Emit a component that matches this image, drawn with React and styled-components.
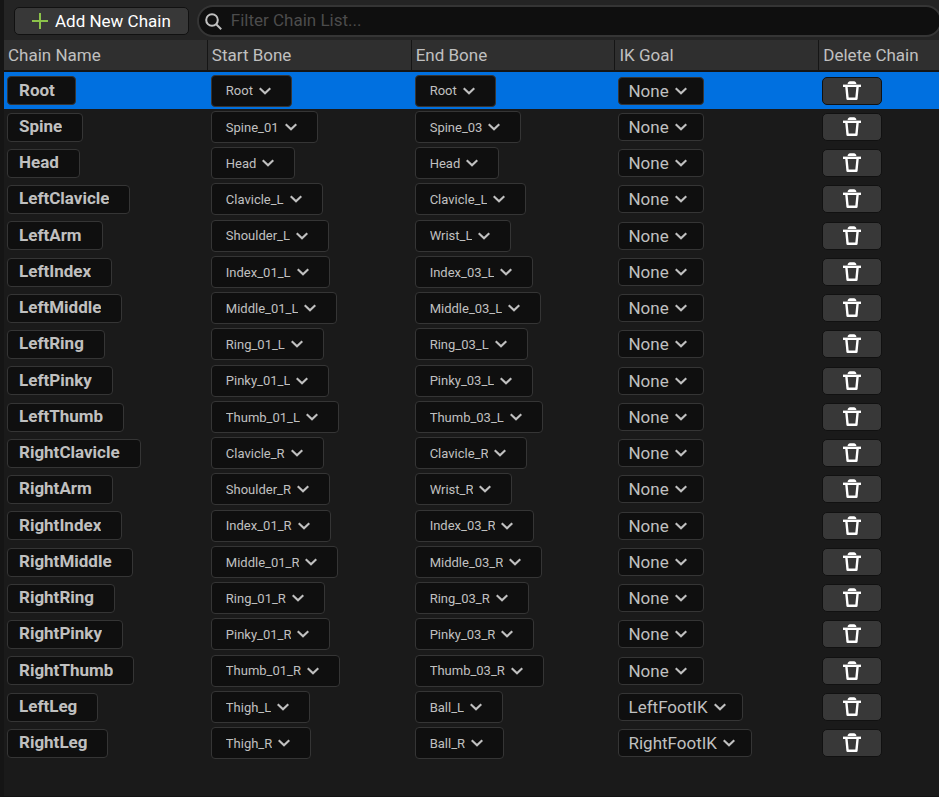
import React, { useState } from 'react';
import styled, { createGlobalStyle } from 'styled-components';

const GlobalStyle = createGlobalStyle`
    * {
        box-sizing: border-box;
    }
    body {
        margin: 0;
        background: #1a1a1a;
        color: #c0c0c0;
        font-family: Roboto, "Liberation Sans", sans-serif;
    }
    button, input, select {
        font-family: inherit;
        margin: 0;
    }
`

const Panel = styled.main`
    min-height: 100vh;
    border-left: 4px solid #151515;
    border-bottom: 1px solid #121212;
    overflow: hidden;
`

const Toolbar = styled.div`
    display: flex;
    align-items: center;
    gap: 8px;
    height: 40px;
    padding: 2px 0 0 10px;
    background: #242424;
`

const AddButton = styled.button`
    display: flex;
    align-items: center;
    gap: 6px;
    height: 28px;
    padding: 0 17px 0 16px;
    border: 1px solid #111;
    border-radius: 5px;
    background: #383838;
    color: #fff;
    font-size: 17px;
    white-space: nowrap;
`

const SearchBox = styled.label`
    display: flex;
    flex: 1;
    align-items: center;
    gap: 9px;
    height: 32px;
    margin-right: -3px;
    padding: 0 6px;
    border: 2px solid #353535;
    border-radius: 16px;
    background: #0f0f0f;
`

const SearchInput = styled.input`
    flex: 1;
    min-width: 0;
    padding: 0 0 2px;
    border: 0;
    outline: 0;
    background: transparent;
    color: #c0c0c0;
    font-size: 17px;

    &::placeholder {
        color: #4c4c4c;
        opacity: 1;
    }
`

const Table = styled.table`
    width: 100%;
    table-layout: fixed;
    border-collapse: separate;
    border-spacing: 0;
`

const HeaderCell = styled.th`
    width: ${props => props.$last ? 'auto' : '21.8%'};
    height: 32px;
    padding: 0 4px;
    border-right: ${props => props.$last ? '0' : '1px solid #151515'};
    border-bottom: 2px solid #151515;
    background: #2f2f2f;
    font-size: 17px;
    font-weight: 400;
    text-align: left;
    white-space: nowrap;
`

const Row = styled.tr`
    height: 36px;
    background: ${props => props.$selected ? '#0070e0' : 'transparent'};

    &:nth-child(4n + 1) {
        height: 37px;
    }
`

const Cell = styled.td`
    padding: 0 3px;
    line-height: 0;
    vertical-align: middle;
`

const NameInput = styled.input`
    field-sizing: content;
    height: 29px;
    padding: 0 20px 2px 11px;
    border: 1px solid #353535;
    border-radius: 4px;
    outline: 0;
    background: #0f0f0f;
    color: #c0c0c0;
    font-size: 17px;
    font-weight: 700;
`

const DropDown = styled.span`
    display: inline-grid;
    align-items: center;

    & > * {
        grid-area: 1 / 1;
    }
    svg {
        justify-self: end;
        margin-right: ${props => props.$small ? '21px' : '17px'};
        pointer-events: none;
    }
`

const Select = styled.select`
    appearance: none;
    field-sizing: content;
    height: ${props => props.$small ? '32px' : '28px'};
    padding: ${props => props.$small ? '0 38px 0 14px' : '0 34px 0 9px'};
    border: 1px solid #353535;
    border-radius: 4px;
    outline: 0;
    background: #0f0f0f;
    color: #c0c0c0;
    font-size: ${props => props.$small ? '13px' : '17px'};
`

const DeleteButton = styled.button`
    display: inline-flex;
    align-items: center;
    justify-content: center;
    width: 60px;
    height: 28px;
    padding: 0;
    border: 1px solid #111;
    border-radius: 5px;
    background: #383838;
`

const PlusIcon = () => (
    <svg width="18" height="18" viewBox="0 0 18 18" stroke="#8bc24a" strokeWidth="2" aria-hidden="true">
        <path d="M9 1v16M1 9h16" />
    </svg>
)

const SearchIcon = () => (
    <svg width="17" height="17" viewBox="0 0 17 17" fill="none" stroke="#c0c0c0" strokeWidth="2" aria-hidden="true">
        <circle cx="7" cy="7" r="5.8" />
        <path d="M11.2 11.2l5 5" />
    </svg>
)

const ChevronIcon = () => (
    <svg width="12" height="8" viewBox="0 0 12 8" fill="none" stroke="#c0c0c0" strokeWidth="2.2" aria-hidden="true">
        <path d="M.7 1.2L6 6.3l5.3-5.1" />
    </svg>
)

const TrashIcon = () => (
    <svg width="18" height="20" viewBox="0 0 18 20" aria-hidden="true">
        <path d="M4.6 2.9C4.8 1 5.8.2 7 .2h4c1.2 0 2.2.8 2.4 2.7z" fill="#fff" />
        <path d="M0 3.6h18V6H0z" fill="#fff" />
        <path d="M3.4 5.5l1.2 12.3h8.8l1.2-12.3" fill="none" stroke="#fff" strokeWidth="2.4" strokeLinejoin="round" />
    </svg>
)

const columns = ['Chain Name', 'Start Bone', 'End Bone', 'IK Goal', 'Delete Chain']

const initialChains = [
    ['Root', 'Root', 'Root', 'None'],
    ['Spine', 'Spine_01', 'Spine_03', 'None'],
    ['Head', 'Head', 'Head', 'None'],
    ['LeftClavicle', 'Clavicle_L', 'Clavicle_L', 'None'],
    ['LeftArm', 'Shoulder_L', 'Wrist_L', 'None'],
    ['LeftIndex', 'Index_01_L', 'Index_03_L', 'None'],
    ['LeftMiddle', 'Middle_01_L', 'Middle_03_L', 'None'],
    ['LeftRing', 'Ring_01_L', 'Ring_03_L', 'None'],
    ['LeftPinky', 'Pinky_01_L', 'Pinky_03_L', 'None'],
    ['LeftThumb', 'Thumb_01_L', 'Thumb_03_L', 'None'],
    ['RightClavicle', 'Clavicle_R', 'Clavicle_R', 'None'],
    ['RightArm', 'Shoulder_R', 'Wrist_R', 'None'],
    ['RightIndex', 'Index_01_R', 'Index_03_R', 'None'],
    ['RightMiddle', 'Middle_01_R', 'Middle_03_R', 'None'],
    ['RightRing', 'Ring_01_R', 'Ring_03_R', 'None'],
    ['RightPinky', 'Pinky_01_R', 'Pinky_03_R', 'None'],
    ['RightThumb', 'Thumb_01_R', 'Thumb_03_R', 'None'],
    ['LeftLeg', 'Thigh_L', 'Ball_L', 'LeftFootIK'],
    ['RightLeg', 'Thigh_R', 'Ball_R', 'RightFootIK'],
].map(([name, start, end, goal], id) => ({ id, name, start, end, goal }))

const Picker = ({ label, value, small }) => (
    <DropDown $small={small}>
        <Select aria-label={label} defaultValue={value} $small={small}>
            <option>{value}</option>
        </Select>
        <ChevronIcon />
    </DropDown>
)

const App = () => {
    const [chains, setChains] = useState(initialChains)
    const [selected, setSelected] = useState(0)
    const [filter, setFilter] = useState('')

    const handleAdd = () => {
        const id = Math.max(-1, ...chains.map(chain => chain.id)) + 1
        setChains([...chains, { id, name: 'NewChain', start: 'None', end: 'None', goal: 'None' }])
    }
    const handleDelete = id => {
        setChains(chains.filter(chain => chain.id !== id))
    }
    const visible = chains.filter(chain => chain.name.toLowerCase().includes(filter.toLowerCase()))

    return (
        <Panel>
            <GlobalStyle />
            <Toolbar>
                <AddButton type="button" onClick={handleAdd}>
                    <PlusIcon />
                    Add New Chain
                </AddButton>
                <SearchBox>
                    <SearchIcon />
                    <SearchInput
                        type="text"
                        aria-label="Filter Chain List"
                        placeholder="Filter Chain List..."
                        value={filter}
                        onChange={event => setFilter(event.target.value)}
                    />
                </SearchBox>
            </Toolbar>
            <Table>
                <thead>
                    <tr>
                        {columns.map((column, i) => (
                            <HeaderCell key={column} $last={i === columns.length - 1}>{column}</HeaderCell>
                        ))}
                    </tr>
                </thead>
                <tbody>
                    {visible.map(chain => (
                        <Row key={chain.id} $selected={chain.id === selected} onClick={() => setSelected(chain.id)}>
                            <Cell><NameInput aria-label="Chain Name" defaultValue={chain.name} /></Cell>
                            <Cell><Picker label="Start Bone" value={chain.start} small /></Cell>
                            <Cell><Picker label="End Bone" value={chain.end} small /></Cell>
                            <Cell><Picker label="IK Goal" value={chain.goal} /></Cell>
                            <Cell>
                                <DeleteButton type="button" aria-label={`Delete ${chain.name}`} onClick={() => handleDelete(chain.id)}>
                                    <TrashIcon />
                                </DeleteButton>
                            </Cell>
                        </Row>
                    ))}
                </tbody>
            </Table>
        </Panel>
    )
}

export default App;
